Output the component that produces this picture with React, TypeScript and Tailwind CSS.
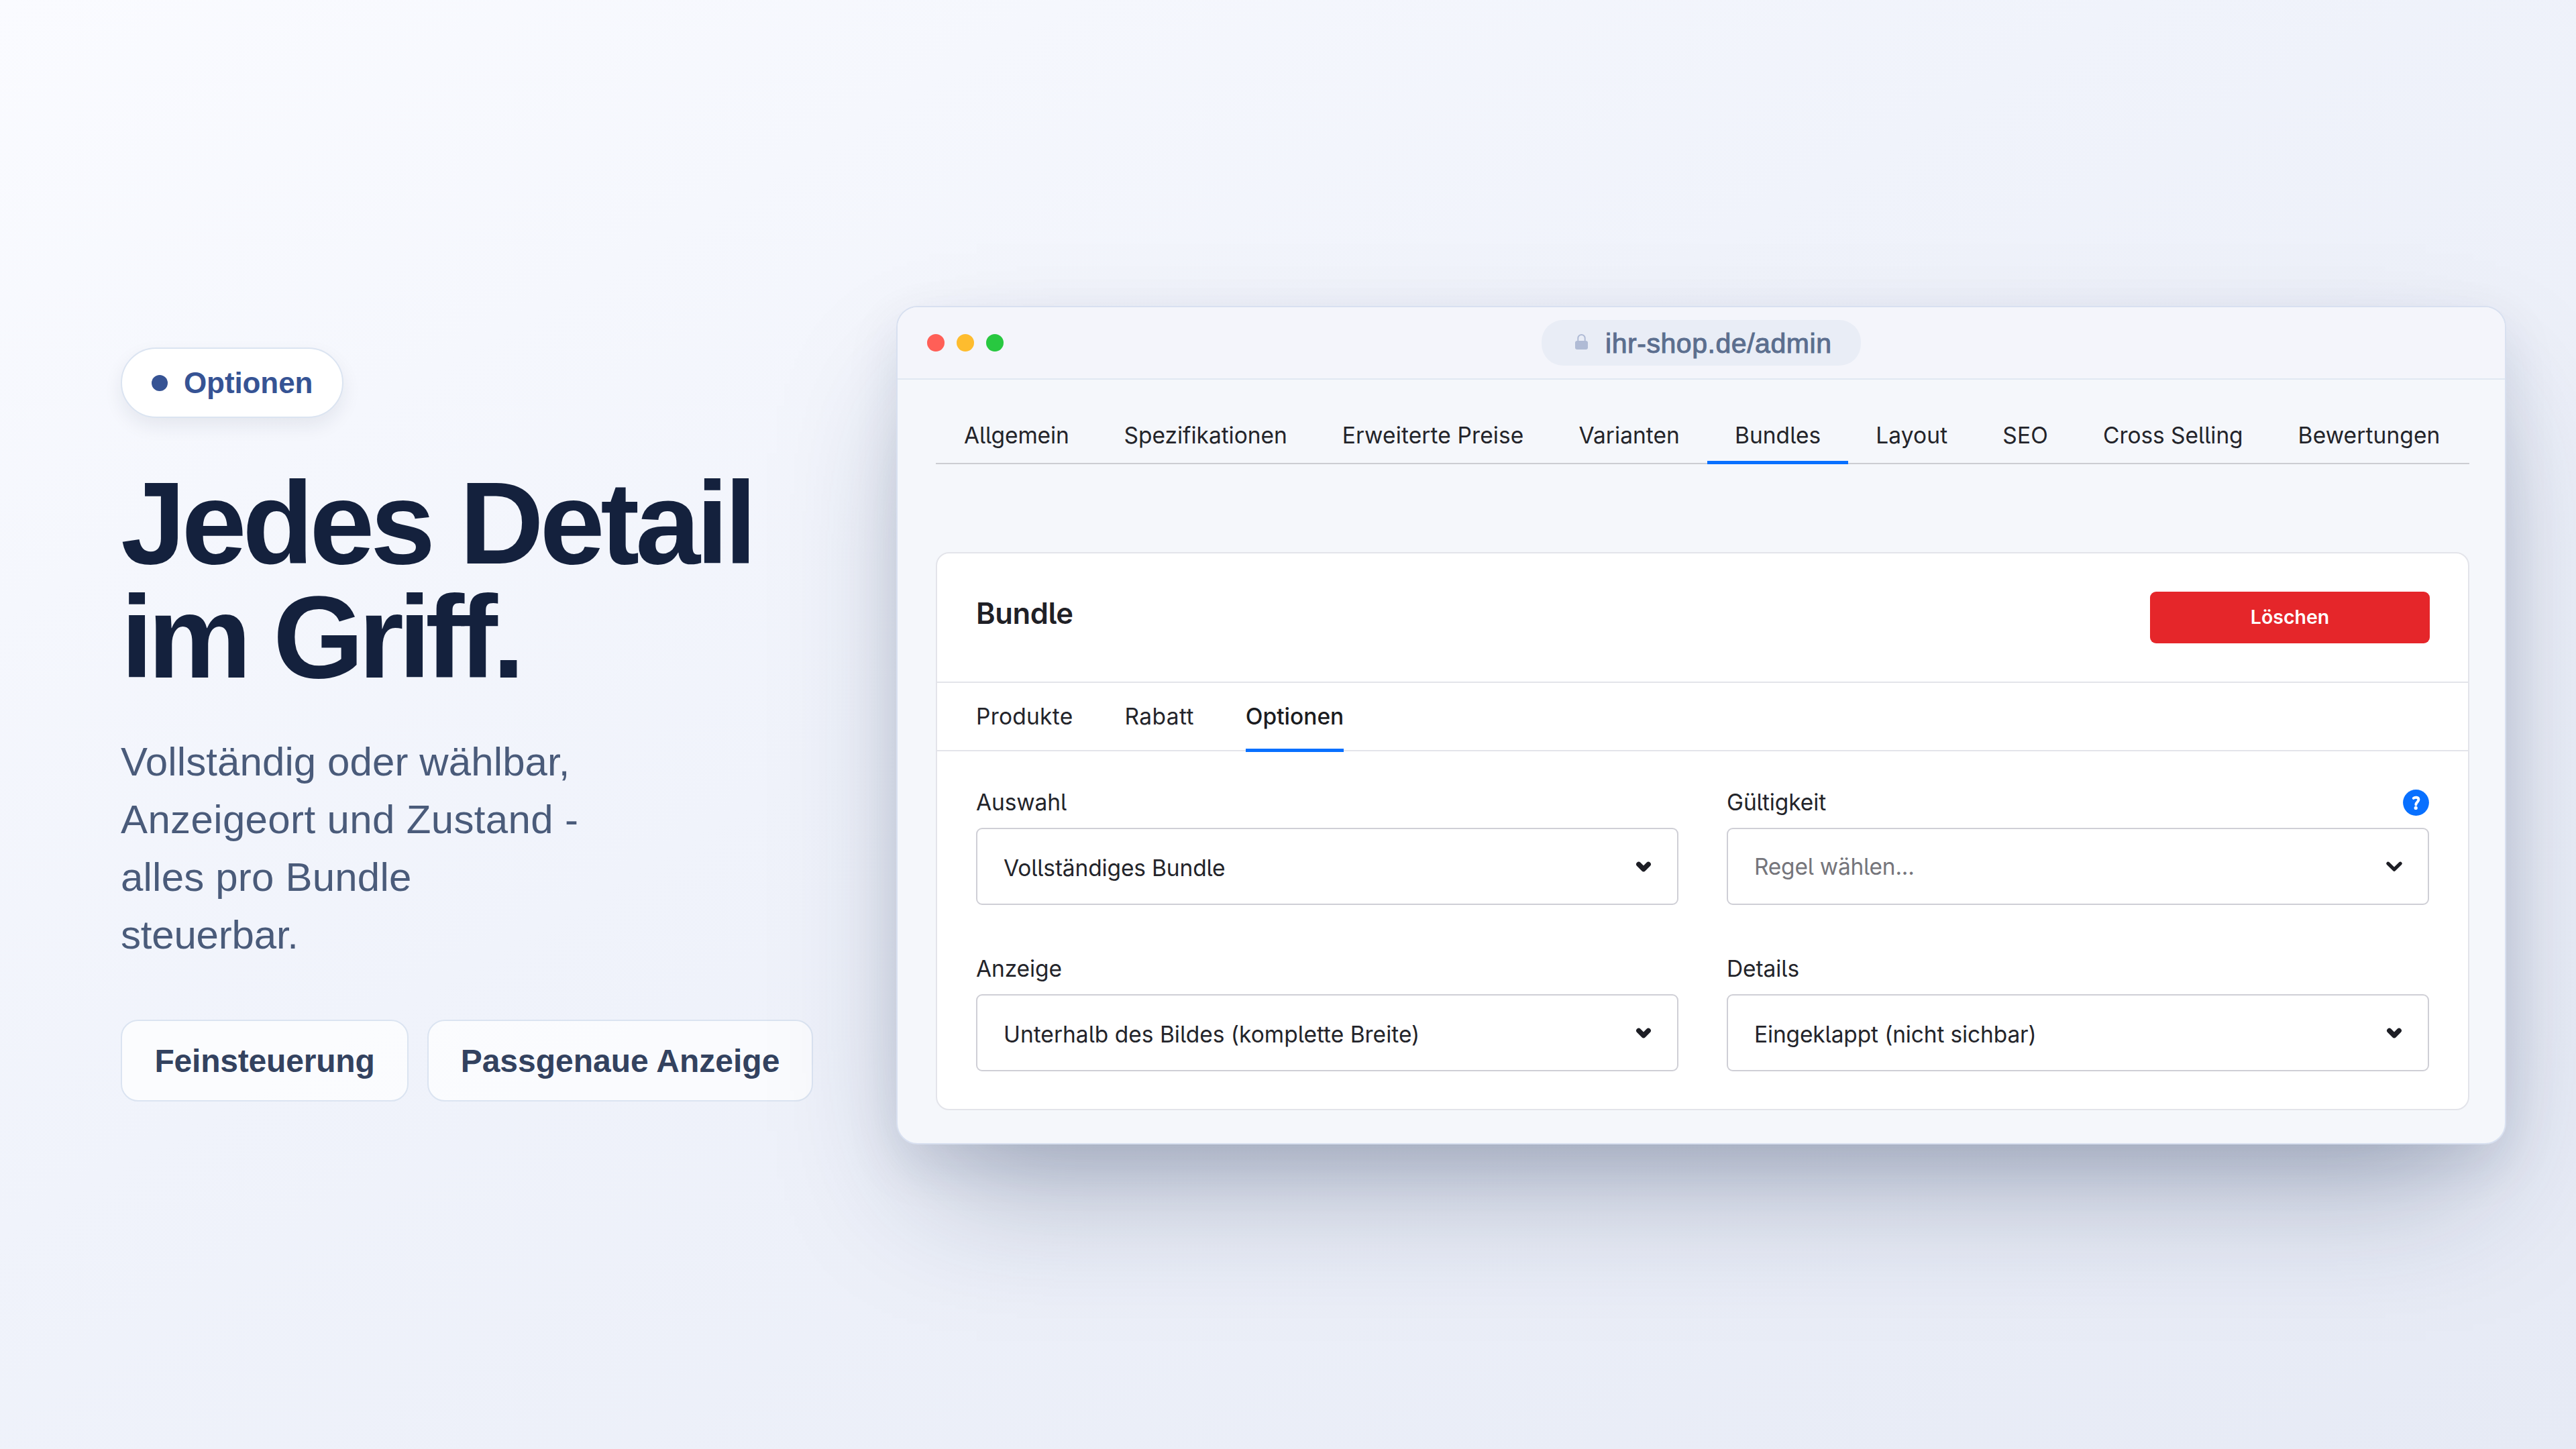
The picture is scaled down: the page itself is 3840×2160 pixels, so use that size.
type TabItem = { label: string; spacing: string; active?: boolean };

const tabs: TabItem[] = [
  { label: "Allgemein", spacing: "tracking-[-0.15px]" },
  { label: "Spezifikationen", spacing: "tracking-[-0.03px]" },
  { label: "Erweiterte Preise", spacing: "tracking-[0.12px]" },
  { label: "Varianten", spacing: "tracking-[0.04px]" },
  { label: "Bundles", spacing: "tracking-[0.06px]", active: true },
  { label: "Layout", spacing: "tracking-[0.1px]" },
  { label: "SEO", spacing: "tracking-[0.2px]" },
  { label: "Cross Selling", spacing: "tracking-[-0.06px]" },
  { label: "Bewertungen", spacing: "tracking-[0.1px]" },
];

function LockIcon() {
  return (
    <svg width="19" height="23" viewBox="0 0 19 23" fill="none" className="mb-[3px]">
      <rect x="0" y="10" width="19" height="13" rx="3" fill="#b0bbd5" />
      <path d="M4.3 11V6.2a5.2 5.2 0 0 1 10.4 0V11" stroke="#b0bbd5" strokeWidth="2" />
    </svg>
  );
}

function Chevron({ heavy }: { heavy?: boolean }) {
  return (
    <svg width="26" height="18" viewBox="0 0 26 18" fill="none">
      <path
        d={heavy ? "M5.8 5.4 13 12.6 20.2 5.4" : "M3.8 4.2 13 13.2 22.2 4.2"}
        stroke="#1d1e25"
        strokeWidth={heavy ? 7.4 : 5.2}
        strokeLinecap="round"
        strokeLinejoin="round"
      />
    </svg>
  );
}

function HelpIcon() {
  return (
    <svg width="39" height="39" viewBox="0 0 39 39" fill="none">
      <circle cx="19.5" cy="19.5" r="19.4" fill="#0870ff" />
      <path
        d="M15.8 12.9c1.6-1.5 7.6-2.3 7.6 2.2 0 3.4-3.9 3.3-4 7.4"
        stroke="#fff"
        strokeWidth="4"
        strokeLinecap="round"
      />
      <circle cx="19.2" cy="27.4" r="2.6" fill="#fff" />
    </svg>
  );
}

type FieldProps = { label: string; value: string; placeholder?: boolean; help?: boolean; spacing?: string };

function Field({ label, value, placeholder, help, spacing = "tracking-[-0.15px]" }: FieldProps) {
  return (
    <div>
      <div className="flex h-[40px] items-center justify-between tracking-[-0.1px]">
        <span>{label}</span>
        {help && <HelpIcon />}
      </div>
      <div className="mt-[18px] flex h-[115px] items-center justify-between rounded-[9px] border-2 border-[#cfcfd6] bg-white pr-[37px] pl-[39px]">
        <span className={`${spacing} ${placeholder ? "text-[#75757b]" : "pt-[5px]"}`}>{value}</span>
        <Chevron heavy={!placeholder} />
      </div>
    </div>
  );
}

export default function App() {
  return (
    <div className="flex h-[2160px] w-[3840px] items-center overflow-hidden bg-[linear-gradient(150deg,#fafbff_0%,#f0f3fb_42%,#e6eaf5_100%)] pl-[180px] font-['Liberation_Sans',sans-serif]">
      <div className="w-[1156px] shrink-0">
        <div className="flex h-[105px] w-[332px] items-center gap-[24px] rounded-full border-2 border-[#dbe4f1] bg-white pl-[44px] shadow-[0_12px_28px_rgba(20,33,61,0.08)]">
          <span className="size-[24px] rounded-full bg-[#365394]" />
          <span className="text-[44px] font-bold tracking-[-0.1px] text-[#365394]">Optionen</span>
        </div>
        <h1 className="mt-[72px] text-[174px] leading-[170px] font-bold text-[#14213d]">
          <span className="block tracking-[-6.1px]">Jedes Detail</span>
          <span className="block tracking-[-8.1px]">im Griff.</span>
        </h1>
        <p className="mt-[58px] text-[60px] leading-[86px] tracking-[0.3px] text-[#4a5b7a]">
          <span className="tracking-[0.1px]">Vollständig oder wählbar,</span>
          <br />
          <span className="tracking-[0.36px]">Anzeigeort und Zustand -</span>
          <br />
          <span className="tracking-[0.2px]">alles pro Bundle</span>
          <br />
          <span className="tracking-[-0.2px]">steuerbar.</span>
        </p>
        <div className="mt-[83px] flex gap-[28px] text-[48px] font-bold text-[#33425f]">
          <div className="flex h-[122px] w-[429px] items-center justify-center rounded-[26px] border-2 border-[#dbe4f1] bg-white/70 pt-[2px] tracking-[-0.2px]">
            Feinsteuerung
          </div>
          <div className="flex h-[122px] w-[575px] items-center justify-center rounded-[26px] border-2 border-[#dbe4f1] bg-white/70 pt-[2px]">
            Passgenaue Anzeige
          </div>
        </div>
      </div>

      <div className="mt-[2px] h-[1250px] w-[2400px] shrink-0 overflow-hidden rounded-[32px] border-2 border-[#d8e0f0] bg-[#f5f7fb] shadow-[0_100px_200px_-50px_rgba(23,40,79,0.34),0_30px_80px_rgba(23,40,79,0.10)]">
        <div className="grid h-[108px] grid-cols-[1fr_auto_1fr] items-center border-b-2 border-[#e0e8f2] bg-[#f4f5fb] px-[44px]">
          <div className="flex gap-[18px]">
            <span className="size-[26px] rounded-full bg-[#ff5f57]" />
            <span className="size-[26px] rounded-full bg-[#febc2e]" />
            <span className="size-[26px] rounded-full bg-[#28c840]" />
          </div>
          <div className="flex h-[68px] w-[476px] items-center gap-[26px] rounded-[32px] bg-[#e9edf6] pl-[50px] text-[41px] text-[#5b6e8e]">
            <LockIcon />
            <span className="pt-[3px] tracking-[0.55px] [-webkit-text-stroke:1px_#5b6e8e]">ihr-shop.de/admin</span>
          </div>
        </div>

        <div className="px-[57px] font-['Inter',sans-serif] text-[33.5px] leading-[40px] text-[#23242a] [font-feature-settings:'cv05']">
          <div className="flex h-[126px] w-[2286px] border-b-2 border-[#cccdd2] pl-px whitespace-nowrap">
            {tabs.map((tab) => (
              <div key={tab.label} className="relative px-[41px] pt-[63px]">
                <span className={tab.spacing}>{tab.label}</span>
                {tab.active && <span className="absolute inset-x-0 bottom-[-2px] h-[5px] bg-[#0870ff]" />}
              </div>
            ))}
          </div>

          <div className="mt-[131px] h-[832px] w-[2286px] rounded-[20px] border-2 border-[#e3e4ea] bg-white">
            <div className="flex h-[193px] items-start justify-between border-b-2 border-[#e3e4ea] pt-[57px] pr-[57px] pl-[58px]">
              <h2 className="mt-[6px] text-[43.5px] leading-[52px] font-semibold tracking-[-0.4px] text-[#1f2026]">Bundle</h2>
              <button className="flex h-[77px] w-[417px] items-center justify-center rounded-[9px] bg-[#e5262a] pb-px text-[28.5px] font-semibold text-white">
                Löschen
              </button>
            </div>
            <div className="flex h-[102px] gap-[77px] border-b-2 border-[#e3e4ea] pt-[30px] pl-[58px]">
              <span className="tracking-[0.25px]">Produkte</span>
              <span className="tracking-[0.4px]">Rabatt</span>
              <div className="relative">
                <span className="font-medium text-[#1a1b20]">Optionen</span>
                <span className="absolute inset-x-0 bottom-[-3px] h-[5px] bg-[#0870ff]" />
              </div>
            </div>
            <div className="grid grid-cols-2 gap-x-[72px] gap-y-[75px] px-[58px] pt-[56px]">
              <Field label="Auswahl" value="Vollständiges Bundle" />
              <Field label="Gültigkeit" value="Regel wählen..." placeholder help spacing="tracking-[-0.25px]" />
              <Field label="Anzeige" value="Unterhalb des Bildes (komplette Breite)" spacing="tracking-normal" />
              <Field label="Details" value="Eingeklappt (nicht sichbar)" />
            </div>
          </div>
        </div>
      </div>
    </div>
  );
}
